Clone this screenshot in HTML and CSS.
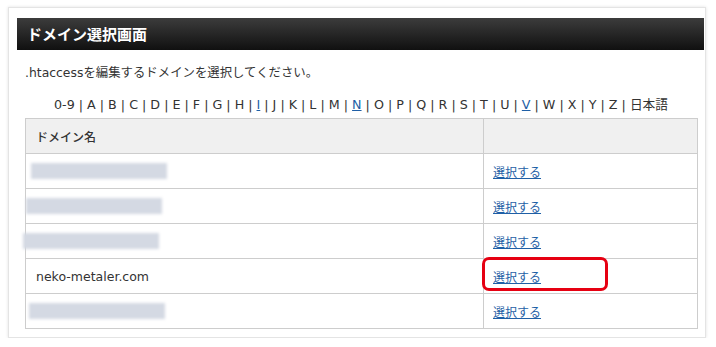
FILE: index.html
```html
<!DOCTYPE html>
<html lang="ja">
<head>
  <meta charset="UTF-8">
  <meta name="viewport" content="width=device-width, initial-scale=1.0">
  <title>ドメイン選択画面</title>
  <link rel="stylesheet" href="styles.css">
</head>
<body>
  <div class="panel">
    <h2 class="panel-title">ドメイン選択画面</h2>

    <div class="panel-body">
      <p class="lead">.htaccessを編集するドメインを選択してください。</p>

      <!-- 頭文字で絞り込み -->
      <p class="index-nav">
        0-9 | A | B | C | D | E | F | G | H | <a href="#">I</a> | J | K | L | M | <a href="#">N</a> | O | P | Q | R | S | T | U | <a href="#">V</a> | W | X | Y | Z | 日本語
      </p>

      <table class="domain-table">
        <thead>
          <tr>
            <th class="col-name">ドメイン名</th>
            <th></th>
          </tr>
        </thead>
        <tbody>
          <tr>
            <td><span class="masked masked-1"></span></td>
            <td><a href="#">選択する</a></td>
          </tr>
          <tr>
            <td><span class="masked masked-2"></span></td>
            <td><a href="#">選択する</a></td>
          </tr>
          <tr>
            <td><span class="masked masked-3"></span></td>
            <td><a href="#">選択する</a></td>
          </tr>
          <tr>
            <td>neko-metaler.com</td>
            <td class="marked"><a href="#">選択する</a><span class="highlight"></span></td>
          </tr>
          <tr>
            <td><span class="masked masked-4"></span></td>
            <td><a href="#">選択する</a></td>
          </tr>
        </tbody>
      </table>
    </div>
  </div>
</body>
</html>
```

FILE: styles.css
```css
body {
  margin: 0;
  background: #fff;
  font-family: "DejaVu Sans", "Noto Sans CJK JP", sans-serif;
  font-size: 12px;
  color: #333;
}
.panel {
  box-sizing: border-box;
  width: 698px;
  height: 331px;
  margin: 7px 0 0 8px;
  padding: 10px 1px 0 8px;
  border: 1px solid #e4e4e4;
  box-shadow: 0 0 3px rgba(0, 0, 0, 0.12);
}
.panel-title {
  margin: 0;
  height: 32px;
  line-height: 32px;
  padding-left: 10px;
  background: linear-gradient(#3c3c3c, #101010);
  color: #fff;
  font-size: 15px;
  font-weight: bold;
  font-family: "Noto Sans CJK JP", sans-serif;
}
.panel-body {
  padding: 0 0 0 8px;
}
.lead {
  margin: 14px 0 0;
  line-height: 18px;
  font-size: 12.4px;
}
.index-nav {
  width: 672px;
  margin: 14px 0 0;
  line-height: 18px;
  text-align: center;
  font-size: 12.7px;
}
.index-nav a,
.domain-table a {
  color: #1f5fa6;
}
.domain-table {
  width: 673px;
  margin-top: 4px;
  border-collapse: collapse;
}
.domain-table th,
.domain-table td {
  height: 34px;
  padding: 0 0 0 10px;
  border: 1px solid #cdcdcd;
  text-align: left;
  vertical-align: middle;
}
.domain-table th {
  background: #f0f0f0;
  font-family: "Noto Sans CJK JP", sans-serif;
  font-weight: 500;
}
.domain-table td {
  font-size: 12.5px;
}
.domain-table td + td {
  padding-left: 9px;
  font-size: 12px;
}
.col-name {
  width: 447px;
}
.masked {
  display: block;
  width: 136px;
  height: 16px;
  background: #d4d9e3;
  filter: blur(1.5px);
}
.masked-1 { margin-left: -5px; }
.masked-2 { margin-left: -10px; }
.masked-3 { margin-left: -13px; }
.masked-4 { margin-left: -7px; }
.marked {
  position: relative;
}
.highlight {
  position: absolute;
  left: -2px;
  top: -2px;
  box-sizing: border-box;
  width: 126px;
  height: 34px;
  border: 3px solid #e60012;
  border-radius: 7px;
}
```
